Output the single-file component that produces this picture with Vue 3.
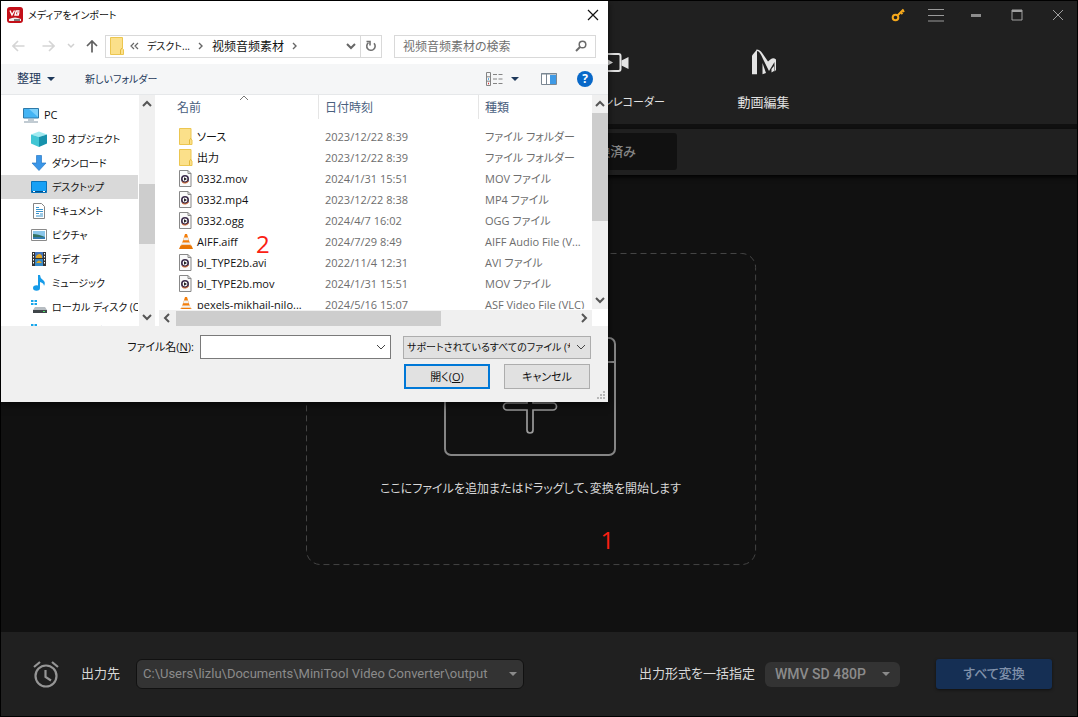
<script setup>
import { ref } from 'vue'

const fileName = ref('')
const query = ref('')
const tree = [
  { name: 'PC', icon: 'pc', root: true },
  { name: '3D オブジェクト', icon: 'cube' },
  { name: 'ダウンロード', icon: 'down' },
  { name: 'デスクトップ', icon: 'desk', on: true },
  { name: 'ドキュメント', icon: 'doc' },
  { name: 'ピクチャ', icon: 'pic' },
  { name: 'ビデオ', icon: 'film' },
  { name: 'ミュージック', icon: 'note' },
  { name: 'ローカル ディスク (C:)', icon: 'disk' },
  { name: 'ローカル ディスク (D:)', icon: 'disk' },
]
const files = [
  ['folder', 'ソース', '2023/12/22 8:39', 'ファイル フォルダー'],
  ['folder', '出力', '2023/12/22 8:39', 'ファイル フォルダー'],
  ['media', '0332.mov', '2024/1/31 15:51', 'MOV ファイル'],
  ['media', '0332.mp4', '2023/12/22 8:38', 'MP4 ファイル'],
  ['media', '0332.ogg', '2024/4/7 16:02', 'OGG ファイル'],
  ['vlc', 'AIFF.aiff', '2024/7/29 8:49', 'AIFF Audio File (V...'],
  ['media', 'bl_TYPE2b.avi', '2022/11/4 12:31', 'AVI ファイル'],
  ['media', 'bl_TYPE2b.mov', '2024/1/31 15:51', 'MOV ファイル'],
  ['vlc', 'pexels-mikhail-nilo...', '2024/5/16 15:07', 'ASF Video File (VLC)'],
]
</script>

<template>
  <div class="app">
    <header class="head">
      <div class="wincontrols">
        <button aria-label="登録"><svg width="14" height="14" viewBox="0 0 14 14" fill="none" stroke="#f5a81c"><circle cx="4.500" cy="9.500" r="2.800" stroke-width="2"/><path d="M6.500 7.500 12.500 1.500" stroke-width="2"/><path d="M10 4.500l1.500 1.500M11.500 2l1.500 2" stroke-width="2"/></svg></button>
        <button aria-label="メニュー"><svg width="16" height="14" viewBox="0 0 16 14" stroke="#9a9a9a"><path d="M0 1.500h16M0 7.500h16M0 13h16" stroke-width="1.200"/></svg></button>
        <button aria-label="最小化"><svg width="12" height="12" viewBox="0 0 12 12"><path d="M1 5h10v3H1z" fill="#8d8d8d"/></svg></button>
        <button aria-label="最大化"><svg width="12" height="12" viewBox="0 0 12 12" fill="none" stroke="#a0a0a0"><path d="M1 1h10v10H1z"/><path d="M1 2h10" stroke-width="2"/></svg></button>
        <button aria-label="閉じる"><svg width="12" height="12" viewBox="0 0 12 12" stroke="#a0a0a0"><path d="M1 1l10 10M11 1 1 11"/></svg></button>
      </div>
      <nav class="nav">
        <a href="#rec">
          <svg width="32" height="26" viewBox="0 0 32 26"><rect x="2" y="5" width="19.500" height="17" rx="2" fill="none" stroke="#e3e3e3" stroke-width="2"/><path d="M8 10l6 3.500-6 3.500zM22.500 11.500 29.500 8v12l-7-3.500z" fill="#e3e3e3"/></svg>
          <span>スクリーンレコーダー</span>
        </a>
        <a href="#edit">
          <svg width="26" height="26" viewBox="0 0 26 26" fill="#e3e3e3"><path d="M1 6.500 6 .5v24.700H1z"/><path d="M5.500.5Q9 .6 11.500 4.500L17 12.500 20 10Q22.500 8.500 25 10.500V21l-1.500 1.500V13L18 22l-6-12Q9.500 4 7.500 2.500L6 2z"/><path d="M11.500 14 15 24l-3.500 1.200zM20.500 20l2.500-3v5l-2.500 1.500z"/></svg>
          <span>動画編集</span>
        </a>
      </nav>
    </header>
    <div class="tabs"><button>変換済み</button></div>

    <main class="stage">
      <section class="drop">
        <svg class="dash" aria-hidden="true"><rect x="0.500" y="0.500" width="99.800%" height="99.700%" rx="14" fill="none" stroke="#444" stroke-dasharray="6 4"/></svg>
        <svg width="172" height="120" viewBox="0 0 172 120" fill="none" stroke="#858585" stroke-width="2"><rect x="0" y="1" width="170" height="117" rx="6"/><path d="M0 25h170"/><path d="M82 66V49a3 3 0 0 1 6 0v17h20a3.500 3.500 0 0 1 0 7H88v20a3 3 0 0 1-6 0V73H62a3.500 3.500 0 0 1 0-7z" stroke="#9a9a9a" stroke-width="1.700"/></svg>
        <p>ここにファイルを追加またはドラッグして、変換を開始します</p>
        <b class="mark one">1</b>
      </section>
    </main>

    <footer class="foot">
      <svg class="alarm" width="26" height="28" viewBox="0 0 26 28" fill="none" stroke="#969696" stroke-width="2.200"><circle cx="13" cy="16" r="10.500"/><path d="M1 7 7 2M25 7l-6-5"/><path d="M12.500 10v7l5.500 3.500"/></svg>
      <label for="out">出力先</label>
      <div class="pick path"><select id="out"><option>C:\Users\lizlu\Documents\MiniTool Video Converter\output</option></select><i></i></div>
      <span class="grow"></span>
      <label for="fmt">出力形式を一括指定</label>
      <div class="pick fmt"><select id="fmt"><option>WMV SD 480P</option></select><i></i></div>
      <button class="convert">すべて変換</button>
    </footer>

    <div class="dialog" role="dialog" aria-labelledby="dlg-title">
      <div class="title">
        <svg width="16" height="16" viewBox="0 0 16 16"><rect width="16" height="16" rx="3" fill="#c30f18"/><path d="M3 3.500 5 8l2.500-4.500M12.500 4H9.200L8 8h3.200l.5-2H10" fill="none" stroke="#fff" stroke-width="1.400"/><path d="M2 12q6-3 12 0v2H2z" fill="#eee"/><path d="M7 13h6" stroke="#555" stroke-width="1.500"/></svg>
        <span id="dlg-title">メディアをインポート</span>
        <button aria-label="閉じる"><svg width="12" height="12" viewBox="0 0 12 12" stroke="#111" stroke-width="1.200"><path d="M1 1l10 10M11 1 1 11"/></svg></button>
      </div>
      <div class="address">
        <div class="arrows">
          <button aria-label="戻る"><svg width="13" height="12" viewBox="0 0 13 12" fill="none" stroke="#d5d5d5" stroke-width="1.600"><path d="M12.500 6H1M6 1 1 6l5 5"/></svg></button>
          <button aria-label="進む"><svg width="13" height="12" viewBox="0 0 13 12" fill="none" stroke="#d5d5d5" stroke-width="1.600"><path d="M.5 6H12M7 1l5 5-5 5"/></svg></button>
          <button aria-label="履歴"><svg width="8" height="6" viewBox="0 0 8 6" fill="none" stroke="#d0d0d0" stroke-width="1.500"><path d="M1 1l3 3 3-3"/></svg></button>
          <button aria-label="上へ"><svg width="12" height="13" viewBox="0 0 12 13" fill="none" stroke="#606060" stroke-width="1.700"><path d="M6 12.500V1M1 6l5-5 5 5"/></svg></button>
        </div>
        <div class="crumbs">
          <svg width="14" height="18" viewBox="0 0 14 18"><path d="M.5.5h12v11l1 1v5H.5z" fill="#fbe08a" stroke="#ecc650"/><path d="M10.500 17v-4l1.500-2" fill="none" stroke="#e3b93c"/></svg>
          <svg width="9" height="8" viewBox="0 0 9 8" fill="none" stroke="#666" stroke-width="1.200"><path d="M4 1 1 4l3 3M8 1 5 4l3 3"/></svg>
          <span>デスクト...</span>
          <svg width="6" height="8" viewBox="0 0 6 8" fill="none" stroke="#666" stroke-width="1.400"><path d="M1 1l3 3-3 3"/></svg>
          <span class="zh">视频音频素材</span>
          <svg width="6" height="8" viewBox="0 0 6 8" fill="none" stroke="#666" stroke-width="1.400"><path d="M1 1l3 3-3 3"/></svg>
          <span class="grow"></span>
          <svg width="10" height="8" viewBox="0 0 10 8" fill="none" stroke="#666" stroke-width="2"><path d="M1 2l4 4 4-4"/></svg>
          <button class="reload" aria-label="更新"><svg width="12" height="12" viewBox="0 0 12 12" fill="none" stroke="#707070" stroke-width="1.600"><path d="M9 3.200A4.200 4.200 0 1 1 3.500 2.700"/><path d="M1.500 1.500H5v4"/></svg></button>
        </div>
        <div class="search">
          <input v-model="query" aria-label="検索" placeholder="视频音频素材の検索">
          <svg width="12" height="12" viewBox="0 0 12 12" fill="none" stroke="#6b6b6b"><circle cx="7.500" cy="4.500" r="3.300" stroke-width="1.500"/><path d="M5 7 1 11" stroke-width="2"/></svg>
        </div>
      </div>
      <div class="tools">
        <button>整理<i></i></button>
        <button class="kana">新しいフォルダー</button>
        <span class="grow"></span>
        <button aria-label="表示方法"><svg width="17" height="14" viewBox="0 0 17 14" fill="none" stroke="#848484"><path d="M.5.5h4v13h-4zM.5 4.800h4M.5 9.200h4M7 2.500h4M12.500 2.500h4M7 7h4M12.500 7h4M7 11.500h4M12.500 11.500h4"/><path d="M2 7h1" stroke="#39d" stroke-width="1.500"/><path d="M2 11.500h1" stroke="#d33" stroke-width="1.500"/></svg><i></i></button>
        <button class="pane" aria-label="プレビュー"><svg width="16" height="12" viewBox="0 0 16 12"><path d="M.5.5h15v11H.5z" fill="#fff" stroke="#7b8792"/><path d="M0 1h16M5.500 1v11" stroke="#7b8792"/><path d="M9 2h6v9H9z" fill="#3e9ae6"/></svg></button>
        <button class="help" aria-label="ヘルプ">?</button>
      </div>
      <div class="panes">
        <ul class="tree">
          <li v-for="n in tree" :key="n.name" :class="{ root: n.root, on: n.on }">
            <svg width="16" height="16" viewBox="0 0 16 16">
              <g v-if="n.icon === 'pc'"><path d="M.5 1.500h15v9.500H.5z" fill="#44b4f4" stroke="#2e79a8"/><path d="M6 2h9v8z" fill="#7cd0fb"/><path d="M5 13h6M1 15h14" stroke="#8397a6"/></g>
              <g v-else-if="n.icon === 'cube'"><path d="M0 3.500 8 .5l8 3-8 2.500z" fill="#a0eaf0"/><path d="M0 3.500 8 6v10l-8-3.500z" fill="#41c6d4"/><path d="M8 6l8-2.500v9L8 16z" fill="#1792ac"/></g>
              <path v-else-if="n.icon === 'down'" d="M5.500.5h5V8H15l-7 7.500L1 8h4.500z" fill="#3a96e8" stroke="#2878c4" stroke-width=".7"/>
              <g v-else-if="n.icon === 'desk'"><path d="M.5 2.500h15v11H.5z" fill="#16a0f5" stroke="#0873bb"/><path d="M1 12.500h14" stroke="#064f88"/><path d="M2 12.500h2M12 12.500h2" stroke="#fff"/></g>
              <g v-else-if="n.icon === 'doc'"><path d="M2.500.5h8l3 3v12h-11z" fill="#fff" stroke="#858585"/><path d="M5 4.500h3M5 6.500h7M5 8.500h7M5 10.500h3M9 11h3M5 13h7" stroke="#3993cc"/></g>
              <g v-else-if="n.icon === 'pic'"><path d="M.5 2.500h15v11H.5z" fill="#fff" stroke="#8a8a8a"/><path d="M2 4h12v8H2z" fill="#8bc6ea"/><path d="M2 7q5 0 12 3v2H2z" fill="#33725f"/><path d="M2 10h12v2H2z" fill="#347bae"/></g>
              <g v-else-if="n.icon === 'film'"><path d="M1 1h14v14H1z" fill="#333"/><path d="M4 1h8v6H4z" fill="#4374bb"/><path d="M4 8h8v7H4z" fill="#378ac9"/><path d="M5 5q4-4 6 0v2H5zM5 12q3-5 6 0z" fill="#e0a625"/><path d="M2.500 2v12M13.500 2v12" stroke="#fff" stroke-dasharray="1.500 1.500"/></g>
              <g v-else-if="n.icon === 'note'" fill="#169be8"><path d="M7 0h2q0 3 3 5t1 6q0-3-4-4v6H7z"/><ellipse cx="5.500" cy="13" rx="3.500" ry="2.700"/></g>
              <g v-else><path d="M0 1h2.500v2H0zM3.500 1H6v2H3.500zM0 4h2.500v2H0zM3.500 4H6v2H3.500z" fill="#16a5ea"/><path d="M4 8h10l2 3H2z" fill="#b7bdc2"/><path d="M2 11h14v3H2z" fill="#3f4549"/><path d="M12 12.500h2" stroke="#4ee66b"/></g>
            </svg>
            <span>{{ n.name }}</span>
          </li>
        </ul>
        <div class="bar tree-bar"><svg viewBox="0 0 10 8"><path d="M1 6l4-4 4 4"/></svg><span></span><svg viewBox="0 0 10 8"><path d="M1 2l4 4 4-4"/></svg></div>
        <div class="list">
          <div class="upper">
            <div class="clip">
              <table>
                <thead><tr><th>名前<svg width="10" height="6" viewBox="0 0 10 6" fill="none" stroke="#777"><path d="M1 5l4-4 4 4"/></svg></th><th>日付時刻</th><th>種類</th></tr></thead>
                <tbody>
                  <tr v-for="f in files" :key="f[1]">
                    <td><div class="name">
                      <svg width="14" height="17" viewBox="0 0 14 17">
                        <g v-if="f[0] === 'folder'"><path d="M.5.500h11.500v10.500l1 1v4.500H.5z" fill="#fbe08a" stroke="#ecc650"/><path d="M10.500 16v-4l1.500-2" fill="none" stroke="#e3b93c"/></g>
                        <g v-else-if="f[0] === 'media'"><path d="M.5.5h8.500l3 3v13H.5z" fill="#fafafa" stroke="#888"/><path d="M9 .5v3h3" fill="none" stroke="#888"/><circle cx="6" cy="9" r="4" fill="#3b2b4a"/><path d="M3 11.800A4 4 0 0 0 9.500 11" fill="none" stroke="#dc6d2e"/><circle cx="6" cy="9" r="2.400" fill="#fff"/><path d="M5 7.200v3.600L8 9z" fill="#222"/></g>
                        <g v-else><path d="M6 1h2l3.800 12H2.200z" fill="#f47e0a"/><path d="M5 4.500h4l.8 2.800H4.200zM3.300 9.500h7.400l.7 2.200H2.600z" fill="#f0f0f0"/><path d="M1.500 12.500h11L14 16H0z" fill="#e87504"/></g>
                      </svg>{{ f[1] }}</div></td>
                    <td>{{ f[2] }}</td><td>{{ f[3] }}</td>
                  </tr>
                </tbody>
              </table>
            </div>
            <div class="bar list-bar"><svg viewBox="0 0 10 8"><path d="M1 6l4-4 4 4"/></svg><span></span><svg viewBox="0 0 10 8"><path d="M1 2l4 4 4-4"/></svg></div>
          </div>
          <div class="hbar"><svg viewBox="0 0 8 10"><path d="M6 1 2 5l4 4"/></svg><span></span><svg viewBox="0 0 8 10"><path d="M2 1l4 4-4 4"/></svg></div>
          <b class="mark two">2</b>
        </div>
      </div>
      <div class="actions">
        <label for="file">ファイル名(<u>N</u>):</label>
        <div class="field"><input id="file" v-model="fileName"><svg width="10" height="6" viewBox="0 0 10 6" fill="none" stroke="#444"><path d="M1 1l4 4 4-4"/></svg></div>
        <div class="field types"><select aria-label="ファイルの種類"><option>サポートされているすべてのファイル (*.*)</option></select><svg width="10" height="6" viewBox="0 0 10 6" fill="none" stroke="#444"><path d="M1 1l4 4 4-4"/></svg></div>
        <div class="buttons"><button class="open">開く(<u>O</u>)</button><button>キャンセル</button></div>
        <svg class="grip" width="8" height="8" viewBox="0 0 8 8" fill="#b8b8b8"><path d="M6 0h2v2H6zM3 3h2v2H3zM6 3h2v2H6zM0 6h2v2H0zM3 6h2v2H3zM6 6h2v2H6z"/></svg>
      </div>
    </div>
  </div>
</template>

<style>
html, body, #app { height: 100%; }
body { margin: 0; background: #000; }
</style>

<style scoped>
* { box-sizing: border-box; }
button, select, input { font: inherit; font-feature-settings: inherit; color: inherit; border: 0; background: none; padding: 0; margin: 0; appearance: none; border-radius: 0; min-width: 0; outline: 0; }
svg { flex: none; display: block; }
button { display: flex; align-items: center; justify-content: center; white-space: nowrap; }
.grow { flex: 1; }
.app { position: relative; display: flex; flex-direction: column; min-height: 100%; border: 1px solid #000; background: #111; color: #d8d8d8; font: 13px/20px Roboto, "Noto Sans CJK JP", sans-serif; font-feature-settings: "palt"; }
.head { height: 123px; background: #202020; }
.wincontrols { display: flex; justify-content: flex-end; align-items: center; height: 28px; padding-right: 11px; gap: 25px; }
.wincontrols button { width: 16px; height: 16px; }
.wincontrols button:first-child { margin-right: -3px; }
.wincontrols button:nth-child(2) { margin-right: -1px; }
.nav { display: flex; margin-left: 50%; padding-left: 1px; }
.nav a { width: 149px; padding-top: 20px; display: flex; flex-direction: column; align-items: center; gap: 18px; color: #e0e0e0; text-decoration: none; white-space: nowrap; }
.nav a span { font-size: 13px; }
.nav a:first-child span { font-size: 11px; }
.tabs { margin-top: 5px; height: 46px; background: #202020; padding: 4px 0 5px; box-shadow: 0 2px 5px #000; }
.tabs button { margin-left: 50%; width: 138px; height: 37px; padding-left: 4px; border-radius: 3px; background: #111; color: #858585; font-weight: 500; }
.stage { flex: 1; display: flex; align-items: center; justify-content: center; padding: 10px 17px 0 0; }
.drop { position: relative; width: 450px; min-height: 312px; padding-top: 84px; display: flex; flex-direction: column; align-items: center; }
.drop svg { overflow: visible; }
.dash { position: absolute; inset: 0; width: 100%; height: 100%; }
.drop p { margin: 20px 0 0; font-size: 12px; line-height: 24px; white-space: nowrap; }
.mark { position: absolute; color: #fb2013; font: 24px/24px "Open Sans", sans-serif; }
.one { left: 295px; top: 275px; }
.two { left: 97px; top: 137px; }
.foot { height: 84px; background: #202020; display: flex; align-items: center; padding: 0 25px 0 32px; white-space: nowrap; }
.alarm { margin-right: 22px; }
.pick { position: relative; display: flex; align-items: center; background: #333; color: #8b8b8b; font-size: 14px; }
.pick select { width: 100%; height: 100%; }
.pick i { position: absolute; right: 10px; border: 4px solid transparent; border-top-color: #8b8b8b; border-bottom: 0; }
.path { width: 388px; height: 30px; margin-left: 16px; padding: 0 20px 0 6px; border: 1px solid #111; border-radius: 6px; font-size: 13px; }
.path i { right: 6px; }
.fmt { width: 135px; height: 25px; margin: 0 36px 0 10px; border-radius: 6px; padding-left: 10px; font-weight: 500; }
.convert { width: 116px; height: 30px; border-radius: 3px; background: #152f54; color: #8091aa; font-weight: 500; box-shadow: 0 1px 3px #0008; }

.dialog { position: absolute; left: 0; top: 0; width: 607px; max-width: 100%; background: #fff; color: #111; font: 11px/16px "Open Sans", "Noto Sans CJK JP", sans-serif; font-feature-settings: "palt"; box-shadow: 0 2px 8px #000a; }
.title { display: flex; align-items: center; height: 27px; padding: 0 9px 0 6px; gap: 5px; font-size: 10px; }
.title button { margin-left: auto; }
.address { display: flex; align-items: center; height: 36px; padding: 0 12px 0 11px; }
.arrows { display: flex; align-items: center; gap: 17px; width: 93px; }
.arrows button:nth-child(3) { margin: 0 -6px 0 -5px; }
.crumbs { display: flex; align-items: center; width: 277px; height: 23px; border: 1px solid #d9d9d9; padding-left: 4px; gap: 8px; font-size: 10px; }
.crumbs > svg:first-child { margin-right: -2px; }
.zh { font-family: "Noto Sans CJK SC", sans-serif; font-size: 12px; }
.reload { width: 21px; height: 21px; border-left: 1px solid #d9d9d9; margin-left: -4px; }
.search { flex: 1; display: flex; align-items: center; height: 23px; margin-left: 12px; padding: 0 8px; border: 1px solid #d9d9d9; }
.search input { flex: 1; font-size: 12px; font-family: "Noto Sans CJK SC", sans-serif; }
.search input::placeholder { color: #707070; opacity: 1; }
.tools { display: flex; align-items: center; height: 31px; background: #f5f6f7; border-bottom: 1px solid #e6e8ea; padding: 0 15px 0 16px; color: #1e395b; font-size: 12px; }
.tools i { margin-left: 6px; border: 4px solid transparent; border-top-color: #1e395b; border-bottom: 0; }
.tools .kana { margin-left: 30px; font-size: 10px; }
.tools svg + i { margin-left: 8px; }
.pane { margin: 0 20px 0 22px; }
.help { width: 16px; height: 16px; border-radius: 50%; background: #0868c8; color: #fff; font-weight: 700; }
.panes { display: flex; height: 231px; }
.tree { list-style: none; margin: 0; padding: 8px 0 0; width: 137px; height: 231px; overflow: hidden; white-space: nowrap; font-size: 10px; }
.tree li { display: flex; align-items: center; height: 24px; gap: 5px; padding-left: 30px; }
.tree li.root { padding-left: 22px; font-size: 11px; }
.tree li.on { background: #d9d9d9; }
.bar { width: 16px; display: flex; flex-direction: column; align-items: center; justify-content: space-between; background: #f0f0f0; padding: 5px 0; flex: none; }
.bar svg { width: 10px; height: 8px; }
.bar path, .hbar path { fill: none; stroke: #555; stroke-width: 2; }
.bar span { width: 100%; height: 60px; background: #cdcdcd; }
.tree-bar { margin-left: 1px; }
.tree-bar span { margin-bottom: -7px; }
.list { position: relative; flex: 1; display: flex; flex-direction: column; min-width: 0; margin-left: 4px; }
.upper { display: flex; height: 214px; }
.clip { flex: 1; overflow: hidden; }
table { width: 100%; table-layout: fixed; border-collapse: separate; border-spacing: 0; }
th { height: 24px; padding: 2px 0 0 6px; text-align: left; font-weight: 400; font-size: 12px; color: #4a607e; border-left: 1px solid #e5e5e5; }
th:nth-child(1) { width: 159px; border: 0; padding-left: 18px; }
th:nth-child(2) { width: 160px; }
th svg { position: absolute; left: 80px; top: 0; }
tbody::before { content: ""; display: block; height: 7px; }
td { height: 21px; padding: 0 0 0 7px; white-space: nowrap; color: #6d6d6d; }
td:first-child { color: #111; padding-left: 20px; }
.name { display: flex; align-items: center; gap: 4px; }
.list-bar { height: 214px; }
.list-bar span { height: 108px; margin-bottom: 71px; }
.hbar { display: flex; align-items: center; justify-content: space-between; height: 16px; margin: 1px 16px 0 0; padding: 0 4px; background: #f0f0f0; }
.hbar svg { width: 8px; height: 10px; }
.hbar span { width: 265px; height: 15px; background: #cdcdcd; margin-right: 134px; }
.actions { position: relative; display: grid; grid-template-columns: 193px 191px 188px; column-gap: 6px; row-gap: 5px; align-items: center; background: #f0f0f0; padding: 9px 0 13px; }
.actions label { text-align: right; }
.field { position: relative; display: flex; align-items: center; height: 24px; background: #fff; border: 1px solid #7a7a7a; }
.field input, .field select { width: 100%; height: 100%; }
.field svg { position: absolute; right: 4px; }
.types { height: 23px; margin-left: 6px; margin-right: -6px; background: #e1e1e1; border-color: #adadad; padding: 0 20px 0 3px; font-size: 10px; }
.buttons { grid-column: 3; display: flex; gap: 14px; padding-left: 7px; margin-right: -6px; }
.buttons button { width: 86px; height: 25px; background: #e1e1e1; border: 1px solid #adadad; }
.buttons .open { border: 2px solid #0078d7; }
.grip { position: absolute; right: 3px; bottom: 3px; }
</style>
